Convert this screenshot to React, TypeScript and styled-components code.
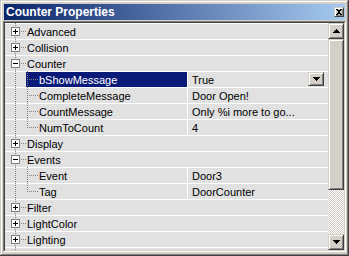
import React from 'react';
import styled, { createGlobalStyle, css } from 'styled-components';

const Global = createGlobalStyle`
  html, body { margin: 0; padding: 0; background: #d4d0c8; }
  body { font-family: "Liberation Sans", Arial, sans-serif; }
  * { box-sizing: border-box; }
`;

const bevelOut = css`
  background: #d4d0c8;
  border: 1px solid;
  border-color: #d4d0c8 #404040 #404040 #d4d0c8;
  box-shadow: inset 1px 1px 0 #fff, inset -1px -1px 0 #808080;
`;

const Window = styled.div`
  width: 349px;
  height: 256px;
  background: #d4d0c8;
  padding: 3px 3px 4px 3px;
  display: flex;
  flex-direction: column;
  box-shadow: inset -1px -1px 0 #404040, inset 1px 1px 0 #d4d0c8, inset -2px -2px 0 #808080, inset 2px 2px 0 #fff;
`;

const TitleBar = styled.div`
  height: 16px;
  margin: 1px 1px 0 1px;
  padding: 0 1px 0 2px;
  display: flex;
  align-items: center;
  justify-content: space-between;
  background: linear-gradient(to right, #0a246a, #a6caf0);
`;

const Title = styled.span`
  color: #fff;
  font: bold 12px "Liberation Sans", Arial, sans-serif;
  line-height: 16px;
  white-space: nowrap;
`;

const CloseButton = styled.div`
  ${bevelOut};
  width: 10px;
  height: 10px;
  display: flex;
  align-items: center;
  justify-content: center;
  padding: 0;
`;

const Sunken = styled.div`
  margin-top: 1px;
  flex: 1;
  display: flex;
  border: 1px solid;
  border-color: #808080 #fff #fff #808080;
`;

const SunkenInner = styled.div`
  flex: 1;
  display: flex;
  border: 1px solid;
  border-color: #404040 #d4d0c8 #d4d0c8 #404040;
  overflow: hidden;
`;

const List = styled.div`
  flex: 1;
  background: #e1e1e1;
  display: flex;
  flex-direction: column;
  overflow: hidden;
  position: relative;
`;

const Row = styled.div`
  height: 16px;
  flex: none;
  display: flex;
  border-top: 1px solid #fff;
  font-size: 11px;
  color: #000;
`;

const NameCell = styled.div<{ $wide?: boolean }>`
  position: relative;
  width: ${(p) => (p.$wide ? '100%' : '182px')};
  flex: none;
  display: flex;
  padding-left: 21px;
`;

const Label = styled.div<{ $indent: number; $selected?: boolean }>`
  flex: 1;
  padding: 1px 0 0 ${(p) => p.$indent}px;
  line-height: 14px;
  white-space: nowrap;
  background: ${(p) => (p.$selected ? '#0a1a78' : 'transparent')};
  color: ${(p) => (p.$selected ? '#fff' : '#000')};
`;

const ValueCell = styled.div`
  flex: 1;
  border-left: 1px solid #fff;
  padding: 1px 4px 0 4px;
  line-height: 14px;
  display: flex;
  align-items: flex-start;
  justify-content: space-between;
  white-space: nowrap;
`;

const VDots = styled.span<{ $left: number; $h?: number }>`
  position: absolute;
  left: ${(p) => p.$left}px;
  top: -1px;
  width: 1px;
  height: ${(p) => (p.$h ? `${p.$h}px` : '16px')};
  background: repeating-linear-gradient(to bottom, #808080 0 1px, transparent 1px 2px);
  z-index: 1;
`;

const HDots = styled.span<{ $left: number; $w: number }>`
  position: absolute;
  left: ${(p) => p.$left}px;
  top: 7px;
  width: ${(p) => p.$w}px;
  height: 1px;
  background: repeating-linear-gradient(to right, #808080 0 1px, transparent 1px 2px);
  z-index: 1;
`;

const ExpandBox = styled.span`
  position: absolute;
  left: 6px;
  top: 3px;
  width: 9px;
  height: 9px;
  border: 1px solid #808080;
  background: #fff;
  z-index: 2;
  display: flex;
  align-items: center;
  justify-content: center;
`;

const DropButton = styled.div`
  ${bevelOut};
  width: 16px;
  height: 14px;
  margin-top: -1px;
  display: flex;
  align-items: center;
  justify-content: center;
  flex: none;
`;

const ScrollBar = styled.div`
  width: 16px;
  flex: none;
  display: flex;
  flex-direction: column;
`;

const ScrollButton = styled.div`
  ${bevelOut};
  width: 16px;
  height: 16px;
  flex: none;
  display: flex;
  align-items: center;
  justify-content: center;
`;

const Thumb = styled.div`
  ${bevelOut};
  width: 16px;
  flex: none;
`;

const Track = styled.div`
  flex: 1;
  background-color: #fff;
  background-image: repeating-conic-gradient(#d4d0c8 0 25%, #fff 0 50%);
  background-size: 2px 2px;
`;

const Arrow = ({ down }: { down?: boolean }) => (
  <svg width="7" height="4" viewBox="0 0 7 4" shapeRendering="crispEdges">
    {down ? (
      <path d="M0 0h7v1H0zM1 1h5v1H1zM2 2h3v1H2zM3 3h1v1H3z" fill="#000" />
    ) : (
      <path d="M3 0h1v1H3zM2 1h3v1H2zM1 2h5v1H1zM0 3h7v1H0z" fill="#000" />
    )}
  </svg>
);

const PlusMinus = ({ open }: { open: boolean }) => (
  <svg width="7" height="7" viewBox="0 0 7 7" shapeRendering="crispEdges">
    <path d="M1 3h5v1H1z" fill="#000" />
    {!open && <path d="M3 1h1v5H3z" fill="#000" />}
  </svg>
);

const CloseGlyph = () => (
  <svg width="6" height="6" viewBox="0 0 6 6" shapeRendering="crispEdges">
    <path
      d="M0 0h2v1H0zM4 0h2v1H4zM1 1h2v1H1zM3 1h2v1H3zM2 2h2v2H2zM1 4h2v1H1zM3 4h2v1H3zM0 5h2v1H0zM4 5h2v1H4z"
      fill="#000"
    />
  </svg>
);

type Item =
  | { kind: 'cat'; name: string; open: boolean }
  | { kind: 'prop'; name: string; value: string; last?: boolean; selected?: boolean; combo?: boolean };

const items: Item[] = [
  { kind: 'cat', name: 'Advanced', open: false },
  { kind: 'cat', name: 'Collision', open: false },
  { kind: 'cat', name: 'Counter', open: true },
  { kind: 'prop', name: 'bShowMessage', value: 'True', selected: true, combo: true },
  { kind: 'prop', name: 'CompleteMessage', value: 'Door Open!' },
  { kind: 'prop', name: 'CountMessage', value: 'Only %i more to go...' },
  { kind: 'prop', name: 'NumToCount', value: '4', last: true },
  { kind: 'cat', name: 'Display', open: false },
  { kind: 'cat', name: 'Events', open: true },
  { kind: 'prop', name: 'Event', value: 'Door3' },
  { kind: 'prop', name: 'Tag', value: 'DoorCounter', last: true },
  { kind: 'cat', name: 'Filter', open: false },
  { kind: 'cat', name: 'LightColor', open: false },
  { kind: 'cat', name: 'Lighting', open: false },
];

const Filler = styled.div`
  flex: 1;
  border-top: 1px solid #fff;
  position: relative;
`;

export default function App() {
  return (
    <>
      <Global />
      <Window>
        <TitleBar>
          <Title>Counter Properties</Title>
          <CloseButton>
            <CloseGlyph />
          </CloseButton>
        </TitleBar>
        <Sunken>
          <SunkenInner>
            <List>
              {items.map((it, i) =>
                it.kind === 'cat' ? (
                  <Row key={i}>
                    <NameCell $wide>
                      <VDots $left={10} />
                      <ExpandBox>
                        <PlusMinus open={it.open} />
                      </ExpandBox>
                      <HDots $left={16} $w={5} />
                      <Label $indent={1}>{it.name}</Label>
                    </NameCell>
                  </Row>
                ) : (
                  <Row key={i}>
                    <NameCell>
                      <VDots $left={10} />
                      <VDots $left={22} $h={it.last ? 9 : 16} />
                      <HDots $left={24} $w={9} />
                      <Label $indent={13} $selected={it.selected}>
                        {it.name}
                      </Label>
                    </NameCell>
                    <ValueCell>
                      <span>{it.value}</span>
                      {it.combo && (
                        <DropButton>
                          <Arrow down />
                        </DropButton>
                      )}
                    </ValueCell>
                  </Row>
                )
              )}
              <Filler>
                <VDots $left={10} />
              </Filler>
            </List>
            <ScrollBar>
              <ScrollButton>
                <Arrow />
              </ScrollButton>
              <Thumb style={{ height: 151 }} />
              <Track />
              <ScrollButton>
                <Arrow down />
              </ScrollButton>
            </ScrollBar>
          </SunkenInner>
        </Sunken>
      </Window>
    </>
  );
}
